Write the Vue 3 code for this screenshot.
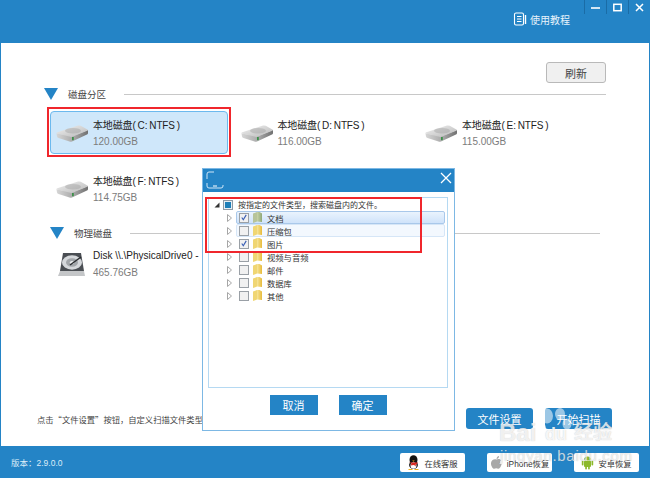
<script setup>
const drives = [
  { name: '本地磁盘( C: NTFS )', size: '120.00GB', selected: true },
  { name: '本地磁盘( D: NTFS )', size: '116.00GB' },
  { name: '本地磁盘( E: NTFS )', size: '115.00GB' },
  { name: '本地磁盘( F: NTFS )', size: '114.75GB' }
]
const types = [
  { name: '文档', checked: true, hl: 'strong', green: true },
  { name: '压缩包', hl: 'soft' },
  { name: '图片', checked: true },
  { name: '视频与音频' },
  { name: '邮件' },
  { name: '数据库' },
  { name: '其他' }
]
</script>

<template>
  <div class="app">
    <svg class="defs" width="0" height="0">
      <defs>
        <linearGradient id="hdTop" x1="0" y1="0" x2="1" y2="1">
          <stop offset="0" stop-color="#f2f2f2" />
          <stop offset="1" stop-color="#b9b9b9" />
        </linearGradient>
        <linearGradient id="hdSide" x1="0" y1="0" x2="1" y2="0">
          <stop offset="0" stop-color="#d6d6d6" />
          <stop offset=".55" stop-color="#a8a8a8" />
          <stop offset="1" stop-color="#707070" />
        </linearGradient>
        <linearGradient id="folderY" x1="0" y1="0" x2="1" y2="0">
          <stop offset="0" stop-color="#f6e59a" />
          <stop offset="1" stop-color="#e8bb3c" />
        </linearGradient>
        <linearGradient id="folderG" x1="0" y1="0" x2="1" y2="0">
          <stop offset="0" stop-color="#c9d3a8" />
          <stop offset="1" stop-color="#8fa878" />
        </linearGradient>
      </defs>
    </svg>

    <header class="topbar">
      <div class="winctrls">
        <span class="winbtn">
          <svg width="9" height="9" viewBox="0 0 9 9"><path d="M0 5h9" stroke="#fff" stroke-width="1.6" /></svg>
        </span>
        <span class="winbtn">
          <svg width="9" height="9" viewBox="0 0 9 9"><rect x=".8" y="1.3" width="7.4" height="6.4" fill="none" stroke="#fff" stroke-width="1.5" /></svg>
        </span>
        <span class="winbtn">
          <svg width="9" height="9" viewBox="0 0 9 9"><path d="M1 1l7 7M8 1L1 8" stroke="#fff" stroke-width="1.5" /></svg>
        </span>
      </div>
      <div class="tutorial">
        <svg width="14" height="14" viewBox="0 0 14 14" fill="none" stroke="#fff">
          <path d="M1.5 2.5a1.5 1.5 0 0 1 1.5-1.5h6a1.5 1.5 0 0 1 1.5 1.5v9a1.5 1.5 0 0 1-1.5 1.5H3a1.5 1.5 0 0 1-1.5-1.5z" stroke-width="1.1" />
          <path d="M4 4.5h4.5M4 7h4.5M4 9.5h4.5" stroke-width="1" />
          <path d="M12.5 3v9" stroke-width="1.4" />
        </svg>
        <span>使用教程</span>
      </div>
    </header>

    <main class="main">
      <div class="toolbar"><button class="refresh">刷新</button></div>

      <div class="heading first">
        <i class="tri"></i><span class="htext">磁盘分区</span><i class="hline"></i>
      </div>

      <div class="drives">
        <div v-for="d in drives" :key="d.name" class="drive" :class="{ selected: d.selected }">
          <svg class="hd" width="32" height="17" viewBox="0 0 32 17">
            <path d="M.5 8.5 1 11.5q.3 1 1.5 1.5l11 3.5q1.2.4 2.5-.1L31 9.5q1-.5 1-1.5V5L17 11z" fill="url(#hdSide)" />
            <path d="M.5 8.5q-.5-.8.8-1.3L22 .6q1.5-.5 2.8.2l6.6 3.7q1 .7-.2 1.3L17 11.6q-1.3.5-2.6.1z" fill="url(#hdTop)" />
            <ellipse cx="17" cy="5.8" rx="8" ry="2.8" fill="#9c9c9c" opacity=".4" />
            <rect x="16" y="12" width="1.8" height="3.2" fill="#3d8f4a" />
          </svg>
          <div class="dtext">
            <div class="dname">{{ d.name }}</div>
            <div class="dsize">{{ d.size }}</div>
          </div>
        </div>
      </div>

      <div class="heading second">
        <i class="tri"></i><span class="htext">物理磁盘</span><i class="hline"></i>
      </div>

      <div class="disk">
        <svg class="phys" width="27" height="26" viewBox="0 0 27 26">
          <path d="M5 1h18l3 18H2z" fill="#4a4e53" />
          <path d="M2 19h24l1 5H0z" fill="#c4c6c8" />
          <ellipse cx="14" cy="10.5" rx="10" ry="7.2" fill="#d5d8db" />
          <ellipse cx="14" cy="10.5" rx="6" ry="4.2" fill="#a2a6aa" />
          <ellipse cx="14" cy="10.5" rx="2.2" ry="1.6" fill="#eef0f1" />
          <path d="M23 5L12 13" stroke="#2a2c2f" stroke-width="1.5" />
        </svg>
        <div class="dtext">
          <div class="dname disk-name">Disk \\.\PhysicalDrive0 -</div>
          <div class="dsize">465.76GB</div>
        </div>
      </div>

      <div class="actions">
        <span class="hint">点击“文件设置”按钮，自定义扫描文件类型</span>
        <div class="actbtns">
          <button class="act"></button>
          <button class="act">文件设置</button>
          <button class="act">开始扫描</button>
        </div>
      </div>
    </main>

    <footer class="footbar">
      <span class="version">版本：2.9.0.0</span>
      <div class="footbtns">
        <button class="fbtn">
          <svg width="13" height="15" viewBox="0 0 13 15">
            <ellipse cx="6.5" cy="5" rx="4" ry="4.8" fill="#111" />
            <ellipse cx="6.5" cy="10" rx="4.4" ry="4" fill="#111" />
            <ellipse cx="6.5" cy="10.5" rx="3" ry="3.2" fill="#fff" />
            <path d="M2 7.5h9l-1.5 2H8.5l.5 2-2-1.5-3.5.5 1-2z" fill="#d9281e" />
            <path d="M5.2 5.6h2.6L6.5 6.8z" fill="#f2b01e" />
            <path d="M1.5 14h4v1h-4zM7.5 14h4v1h-4z" fill="#f2b01e" />
          </svg>
          <span>在线客服</span>
        </button>
        <button class="fbtn">
          <svg width="13" height="15" viewBox="0 0 13 15">
            <path d="M6.5 4.5C8 3.6 10 3.8 11 5.2 9.6 6.2 9.8 8.6 11.6 9.2 11 11.5 9.5 13.8 8.2 13.8 7.4 13.8 7 13.3 6.2 13.3S4.9 13.8 4.2 13.8C2.6 13.8.8 10.6 1 8 1.2 5 4.2 3.5 6.5 4.5z" fill="#a8a8a8" />
            <path d="M6.5 4C6.5 2.4 7.6 1.2 9 1 9.1 2.6 8 3.9 6.5 4z" fill="#a8a8a8" />
          </svg>
          <span>iPhone恢复</span>
        </button>
        <button class="fbtn">
          <svg width="13" height="15" viewBox="0 0 13 15" fill="#8cb92b">
            <path d="M3 5a3.5 3.5 0 0 1 7 0z" />
            <rect x="3" y="5.6" width="7" height="6.4" rx="1" />
            <rect x=".8" y="5.6" width="1.7" height="5" rx=".8" />
            <rect x="10.5" y="5.6" width="1.7" height="5" rx=".8" />
            <rect x="4.2" y="11" width="1.7" height="3.6" rx=".8" />
            <rect x="7.1" y="11" width="1.7" height="3.6" rx=".8" />
          </svg>
          <span>安卓恢复</span>
        </button>
      </div>
    </footer>

    <div class="modal">
      <div class="mtitle">
        <svg class="micon" width="18" height="18" viewBox="0 0 18 18" fill="none" stroke="#cfe6f7" stroke-width="1">
          <path d="M1 8V3a2 2 0 0 1 2-2h5M1 12v3a2 2 0 0 0 2 2h12a2 2 0 0 0 2-2v-1" />
          <path d="M7 15h4" stroke="#fff" />
        </svg>
        <svg class="mclose" width="12" height="12" viewBox="0 0 12 12"><path d="M1 1l10 10M11 1L1 11" stroke="#fff" stroke-width="1.3" /></svg>
      </div>
      <div class="tree">
        <div class="troot">
          <svg class="rootarrow" width="6" height="6" viewBox="0 0 6 6"><path d="M5.5.5v5h-5z" fill="#333" /></svg>
          <span class="rootbox"><i></i></span>
          <span class="ttext">按指定的文件类型，搜索磁盘内的文件。</span>
        </div>
        <div v-for="t in types" :key="t.name" class="trow">
          <svg class="arrow" width="5" height="8" viewBox="0 0 5 8"><path d="M.5.5L4.5 4 .5 7.5z" fill="#fff" stroke="#a6a6a6" /></svg>
          <div class="tcell" :class="t.hl">
            <span class="cb">
              <svg v-if="t.checked" width="9" height="9" viewBox="0 0 9 9"><path d="M2 4.5l1.7 2.5L7 1.5" fill="none" stroke="#3a5fb5" stroke-width="1.3" /></svg>
            </span>
            <svg class="folder" width="9" height="11" viewBox="0 0 9 11">
              <path d="M0 1.5L4 0v9.5L0 11z" :fill="t.green ? '#b7c49a' : '#f0d673'" />
              <path d="M4 0h2.5L9 1.5V10L4 9.5z" :fill="t.green ? 'url(#folderG)' : 'url(#folderY)'" />
            </svg>
            <span class="ttext">{{ t.name }}</span>
          </div>
        </div>
      </div>
      <div class="mbtns">
        <button class="mbtn">取消</button>
        <button class="mbtn">确定</button>
      </div>
    </div>

    <div class="mark mark-drive"></div>
    <div class="mark mark-tree"></div>

    <div class="wm">
      <svg class="paw" width="34" height="38" viewBox="0 0 34 38" fill="#fff">
        <ellipse cx="9" cy="8" rx="6" ry="7.5" />
        <ellipse cx="22" cy="6" rx="5" ry="6" />
        <ellipse cx="4" cy="20" rx="4" ry="5" />
        <ellipse cx="29" cy="16" rx="4.5" ry="5.5" />
      </svg>
      <span class="wm-brand">Bai</span>
      <span class="wm-du">du</span>
      <span class="wm-cn">经验</span>
      <span class="wm-url">jingyan.baidu.com</span>
    </div>
  </div>
</template>

<style scoped>
.app {
  position: relative;
  width: 650px;
  height: 478px;
  display: flex;
  flex-direction: column;
  background: #2484c6;
  overflow: hidden;
  font-family: "Liberation Sans", "Noto Sans CJK SC", sans-serif;
  font-size: 10px;
  color: #333;
}
.defs { position: absolute; }
button { font-family: inherit; border: 0; padding: 0; }

.topbar {
  height: 43px;
  flex: none;
  display: flex;
  flex-direction: column;
  align-items: flex-end;
}
.winctrls { display: flex; height: 14px; }
.winbtn {
  width: 21px;
  height: 14px;
  border-left: 1px solid #1a6ca6;
  display: flex;
  align-items: center;
  justify-content: center;
}
.tutorial {
  display: flex;
  align-items: center;
  gap: 3px;
  margin-right: 80px;
  color: #e8f3fb;
  height: 14px;
  margin-top: -2px;
  white-space: nowrap;
}

.main {
  flex: 1;
  margin: 0 1px;
  background: #fff;
  display: flex;
  flex-direction: column;
  min-height: 0;
}
.toolbar {
  display: flex;
  justify-content: flex-end;
  padding: 19px 43px 0 0;
}
.refresh {
  width: 60px;
  height: 21px;
  background: #f0f0f0;
  border: 1px solid #b9b9b9;
  border-radius: 3px;
  font-size: 11px;
  color: #444;
}
.heading {
  display: flex;
  align-items: center;
  height: 14px;
}
.heading.first { margin-top: 4px; padding: 0 43px 0 43px; }
.heading.second { margin-top: 16px; padding: 0 49px 0 49px; }
.tri {
  width: 0;
  height: 0;
  border-left: 7px solid transparent;
  border-right: 7px solid transparent;
  border-top: 12px solid #2484c6;
  flex: none;
}
.htext { margin-left: 10px; font-size: 9.5px; color: #444; white-space: nowrap; }
.hline { flex: 1; height: 1px; background: #c8c8c8; margin-left: 18px; }

.drives {
  display: grid;
  grid-template-columns: 184.5px 184.5px 184.5px;
  grid-auto-rows: 43px;
  row-gap: 13px;
  margin: 10px 0 0 49px;
}
.drive {
  display: flex;
  align-items: center;
  width: 178px;
  border: 1px solid transparent;
  border-radius: 4px;
  box-sizing: border-box;
  padding-left: 5px;
}
.drive.selected { background: #cfe7fa; border-color: #6cb9ee; }
.hd { flex: none; margin-right: 5px; margin-top: 2px; }
.dtext { margin-top: 2px; }
.dname {
  white-space: nowrap;
  color: #222;
  line-height: 14px;
  letter-spacing: -.15px;
  word-spacing: -.6px;
}
.dsize { color: #7c7c7c; line-height: 14px; margin-top: 2px; }

.disk {
  display: flex;
  align-items: center;
  height: 43px;
  margin: 3px 0 0 57px;
}
.phys { flex: none; margin-right: 8px; }
.disk .dtext { margin-top: 0; }
.disk .dsize { margin-top: 3px; }
.disk-name { letter-spacing: 0; word-spacing: 0; }

.actions {
  margin-top: auto;
  padding: 0 37px 17px 36px;
  display: flex;
  align-items: center;
  justify-content: space-between;
}
.hint {
  font-family: "Noto Sans CJK SC", sans-serif;
  font-size: 8.3px;
  color: #444;
  white-space: nowrap;
}
.actbtns { display: flex; gap: 12px; }
.act {
  width: 67px;
  height: 21px;
  border-radius: 3px;
  background: #2484c6;
  color: #fff;
  font-size: 11px;
}

.footbar {
  height: 32px;
  flex: none;
  display: flex;
  align-items: center;
  justify-content: space-between;
  padding: 0 11px;
}
.version { color: #dcecf8; font-size: 8.5px; }
.footbtns { display: flex; gap: 22px; }
.fbtn {
  width: 65px;
  height: 19px;
  margin-top: 1px;
  background: #fff;
  border-radius: 2px;
  display: flex;
  align-items: center;
  justify-content: center;
  gap: 4px;
  font-size: 8.3px;
  color: #333;
  white-space: nowrap;
}

.modal {
  position: absolute;
  left: 202px;
  top: 168px;
  width: 253px;
  height: 263px;
  box-sizing: border-box;
  background: #fff;
  border: 1px solid #7db8e4;
  display: flex;
  flex-direction: column;
}
.mtitle {
  height: 23px;
  box-sizing: border-box;
  flex: none;
  background: #2484c6;
  display: flex;
  align-items: flex-start;
  justify-content: space-between;
  padding: 2px 2px 0 3px;
}
.mclose { margin-top: 1px; }
.tree {
  height: 191px;
  flex: none;
  box-sizing: border-box;
  margin: 5px 6px 0 5px;
  border: 1px solid #b5d9f2;
  font-size: 8.3px;
  color: #333;
}
.troot {
  display: flex;
  align-items: center;
  height: 13px;
  padding-left: 5px;
}
.rootarrow { flex: none; }
.rootbox {
  width: 8px;
  height: 8px;
  margin-left: 3px;
  border: 1px solid #8f9aa5;
  background: #e8eef3;
  display: flex;
  align-items: center;
  justify-content: center;
  flex: none;
}
.rootbox i { width: 6px; height: 6px; background: #1f7fb8; }
.troot .ttext { margin-left: 5px; font-size: 8px; white-space: nowrap; }
.trow {
  display: flex;
  align-items: center;
  height: 13px;
  padding: 0 2px 0 18px;
}
.arrow { flex: none; }
.tcell {
  flex: 1;
  height: 13px;
  box-sizing: border-box;
  margin-left: 4px;
  padding-left: 2px;
  display: flex;
  align-items: center;
  border: 1px solid transparent;
  border-radius: 2px;
}
.tcell.strong { background: linear-gradient(#eaf3fd, #cfe3fa); border-color: #a9c8ea; }
.tcell.soft { background: #f3f8fe; border-color: #d6e6f7; }
.cb {
  width: 8px;
  height: 8px;
  flex: none;
  border: 1px solid #9aa0a6;
  background: #f1f1f1;
  display: flex;
  align-items: center;
  justify-content: center;
}
.folder { flex: none; margin-left: 4px; }
.tcell .ttext { margin-left: 5px; white-space: nowrap; }

.mbtns {
  display: flex;
  justify-content: center;
  gap: 21px;
  margin-top: 7px;
  padding-right: 1px;
}
.mbtn {
  width: 48px;
  height: 20px;
  background: #2484c6;
  color: #fff;
  font-size: 11px;
}

.mark {
  position: absolute;
  box-sizing: border-box;
  border: 2px solid #f0262c;
}
.mark-drive { left: 47px; top: 107px; width: 184px; height: 50px; }
.mark-tree { left: 205px; top: 197px; width: 217px; height: 56px; }

.wm {
  position: absolute;
  left: 498px;
  top: 408px;
  width: 120px;
  height: 60px;
  pointer-events: none;
}
.paw { position: absolute; left: 40px; top: 0; opacity: .55; }
.wm-brand, .wm-du, .wm-cn, .wm-url {
  position: absolute;
  color: rgba(255, 255, 255, .75);
  text-shadow: 0 0 1px rgba(110, 110, 110, .4);
  white-space: nowrap;
}
.wm-brand { left: 1px; top: 12px; font-size: 24px; font-weight: 700; line-height: 26px; }
.wm-du { left: 47px; top: 16px; font-size: 18px; font-weight: 700; line-height: 20px; color: rgba(255,255,255,.85); }
.wm-cn { left: 76px; top: 13px; font-size: 19px; font-weight: 700; line-height: 24px; }
.wm-url { left: 2px; top: 39px; font-size: 15px; line-height: 17px; letter-spacing: .7px; color: rgba(255,255,255,.7); text-shadow: 0 0 1px rgba(110, 110, 110, .45); }
</style>
